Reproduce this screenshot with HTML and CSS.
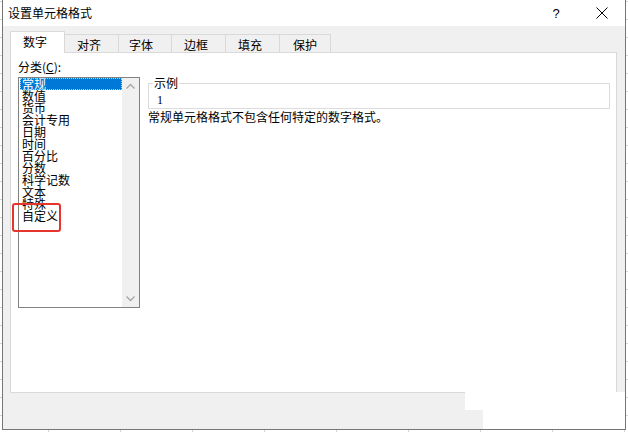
FILE: index.html
```html
<!DOCTYPE html>
<html lang="zh-CN">
<head>
<meta charset="utf-8">
<title>设置单元格格式</title>
<link rel="stylesheet" href="styles.css">
</head>
<body>
<div class="dialog">
  <div class="titlebar">
    <span class="title">设置单元格格式</span>
    <div class="tb-buttons">
      <span class="tb-btn help">?</span>
      <span class="tb-btn close"><svg width="12" height="12" viewBox="0 0 12 12"><path d="M0.5 0.5 L11.5 11.5 M11.5 0.5 L0.5 11.5" stroke="#000" stroke-width="1" fill="none"/></svg></span>
    </div>
  </div>
  <div class="body">
    <div class="tabs">
      <div class="tab active t1">数字</div>
      <div class="tab t2">对齐</div>
      <div class="tab t3">字体</div>
      <div class="tab t4">边框</div>
      <div class="tab t5">填充</div>
      <div class="tab t6">保护</div>
    </div>
    <div class="panel">
      <div class="left">
        <div class="cat-label">分类(<u>C</u>):</div>
        <div class="listbox">
          <ul class="items">
            <li class="sel">常规</li>
            <li>数值</li>
            <li>货币</li>
            <li>会计专用</li>
            <li>日期</li>
            <li>时间</li>
            <li>百分比</li>
            <li>分数</li>
            <li>科学记数</li>
            <li>文本</li>
            <li>特殊</li>
            <li>自定义</li>
          </ul>
          <div class="scrollbar">
            <svg width="17" height="17" viewBox="0 0 17 17"><path d="M4.5 10.5 L8.5 6.5 L12.5 10.5" stroke="#a6a6a6" stroke-width="1.4" fill="none"/></svg>
            <svg width="17" height="17" viewBox="0 0 17 17"><path d="M4.5 6.5 L8.5 10.5 L12.5 6.5" stroke="#a6a6a6" stroke-width="1.4" fill="none"/></svg>
          </div>
        </div>
      </div>
      <div class="right">
        <fieldset class="sample">
          <legend>示例</legend>
          <div class="sample-val">1</div>
        </fieldset>
        <p class="desc">常规单元格格式不包含任何特定的数字格式。</p>
      </div>
    </div>
  </div>
  <div class="redbox"></div>
  <div class="blot"></div>
</div>
</body>
</html>
```
FILE: styles.css
```css
html, body {
  margin: 0;
  padding: 0;
}
body {
  width: 628px;
  height: 432px;
  overflow: hidden;
  background-color: #fff;
  background-image:
    linear-gradient(#d4d4d4 1px, transparent 1px),
    linear-gradient(90deg, #d4d4d4 1px, transparent 1px);
  background-size: 72px 18px;
  background-position: 48px 1px;
  font-family: "Noto Sans CJK SC", "Liberation Sans", sans-serif;
  color: #000;
}
.dialog {
  position: relative;
  margin-left: 2px;
  width: 624px;
  height: 430px;
  box-sizing: border-box;
  border: 1px solid #767676;
  border-top: none;
  background: #f0f0f0;
  display: flex;
  flex-direction: column;
}
.titlebar {
  height: 26px;
  flex: none;
  background: #fff;
  display: flex;
  align-items: center;
  justify-content: space-between;
  padding-left: 5px;
}
.title {
  font-size: 12px;
  line-height: 14px;
}
.tb-buttons {
  display: flex;
  height: 26px;
}
.tb-btn {
  width: 46px;
  height: 26px;
  display: flex;
  align-items: center;
  justify-content: center;
}
.help {
  font-family: "Liberation Sans", sans-serif;
  font-size: 13px;
  padding-left: 1px;
}
.body {
  padding: 5px 8px 0 7px;
}
.tabs {
  display: flex;
  align-items: flex-start;
  height: 22px;
  margin-bottom: -1px;
  position: relative;
  z-index: 1;
}
.tab {
  box-sizing: border-box;
  height: 18px;
  margin-top: 3px;
  border: 1px solid #d9d9d9;
  border-bottom: none;
  margin-left: -1px;
  padding: 2px 0 0 12px;
  font-size: 12px;
  line-height: 15px;
  background: #f0f0f0;
  width: 55px;
}
.tab.active {
  height: 22px;
  margin-top: 0;
  margin-left: 0;
  background: #fff;
  padding-top: 3px;
  line-height: 14px;
}
.t3 { width: 54px; padding-left: 10px; }
.t6 { width: 52px; padding-left: 13px; }
.panel {
  height: 341px;
  box-sizing: border-box;
  border: 1px solid #d9d9d9;
  background: #fff;
  display: flex;
  align-items: flex-start;
  padding: 7px 0 0 7px;
}
.cat-label {
  font-size: 12px;
  line-height: 14px;
  height: 14px;
}
.cat-label u {
  text-underline-offset: 1px;
}
.listbox {
  margin-top: 3px;
  width: 122px;
  height: 231px;
  box-sizing: border-box;
  border: 1px solid #828282;
  display: flex;
}
.items {
  flex: 1;
  list-style: none;
  margin: 0;
  padding: 0;
  min-width: 0;
}
.items li {
  font-size: 12px;
  line-height: 12px;
  height: 12px;
  margin-left: 1px;
  padding-left: 2px;
  white-space: nowrap;
}
.items li.sel {
  background: #0078d7;
  color: #fff;
  outline: 1px dotted #a9d0f5;
  outline-offset: -1px;
}
.scrollbar {
  width: 17px;
  flex: none;
  background: #f0f0f0;
  display: flex;
  flex-direction: column;
  justify-content: space-between;
}
.scrollbar svg {
  display: block;
}
.right {
  margin-left: 8px;
  margin-top: 16px;
  width: 462px;
}
.sample {
  margin: 0;
  padding: 3px 0 1px 8px;
  border: 1px solid #dcdcdc;
  min-width: 0;
  box-sizing: border-box;
  width: 462px;
}
.sample legend {
  font-size: 12px;
  line-height: 14px;
  padding: 0 1px;
  margin-left: -4px;
}
.sample-val {
  font-family: "Liberation Serif", serif;
  font-size: 12px;
  line-height: 14px;
}
.desc {
  margin: 1px 0 0;
  font-size: 12px;
  line-height: 14px;
}
.redbox {
  position: absolute;
  left: 9px;
  top: 203px;
  width: 49px;
  height: 29px;
  box-sizing: border-box;
  border: 2px solid #e5352c;
  border-radius: 3px;
}
.blot {
  position: absolute;
  left: 462px;
  top: 367px;
  width: 160px;
  height: 62px;
  background: #fff;
  clip-path: polygon(0 25px, 100% 25px, 100% 100%, 18px 100%, 18px 43px, 0 43px);
}
```
